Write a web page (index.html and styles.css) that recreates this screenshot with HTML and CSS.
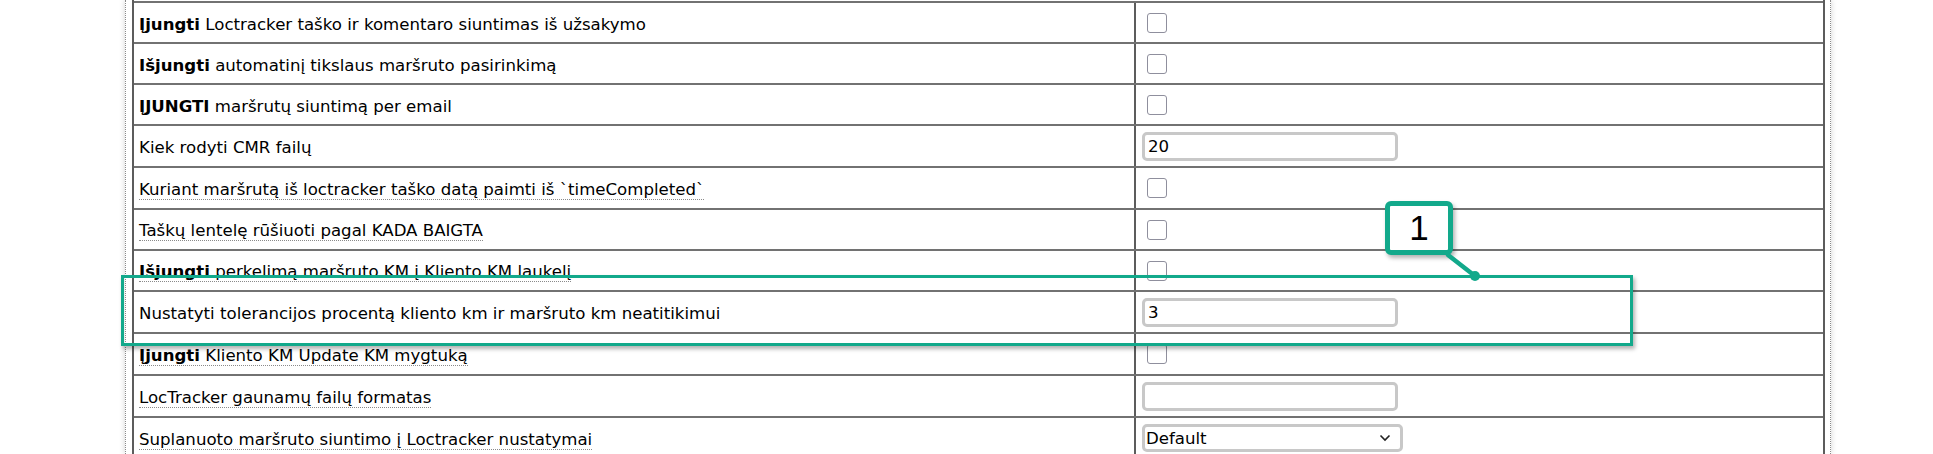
FILE: index.html
```html
<!DOCTYPE html>
<html lang="lt">
<head>
<meta charset="utf-8">
<title>Nustatymai</title>
<link rel="stylesheet" href="styles.css">
</head>
<body>
<div class="page">
  <div class="sheet">
    <div class="settings">
      <div class="row h41">
        <div class="label"><span class="txt"><b>Įjungti</b> Loctracker taško ir komentaro siuntimas iš užsakymo</span></div>
        <div class="value"><input type="checkbox" class="check"></div>
      </div>
      <div class="row h41">
        <div class="label"><span class="txt"><b>Išjungti</b> automatinį tikslaus maršruto pasirinkimą</span></div>
        <div class="value"><input type="checkbox" class="check"></div>
      </div>
      <div class="row h41">
        <div class="label"><span class="txt"><b>ĮJUNGTI</b> maršrutų siuntimą per email</span></div>
        <div class="value"><input type="checkbox" class="check"></div>
      </div>
      <div class="row h42">
        <div class="label"><span class="txt">Kiek rodyti CMR failų</span></div>
        <div class="value"><input type="text" class="field" value="20"></div>
      </div>
      <div class="row h42">
        <div class="label"><span class="txt hint">Kuriant maršrutą iš loctracker taško datą paimti iš `timeCompleted`</span></div>
        <div class="value"><input type="checkbox" class="check"></div>
      </div>
      <div class="row h41">
        <div class="label"><span class="txt hint">Taškų lentelę rūšiuoti pagal KADA BAIGTA</span></div>
        <div class="value"><input type="checkbox" class="check"></div>
      </div>
      <div class="row h41">
        <div class="label"><span class="txt hint"><b>Išjungti</b> perkelimą maršruto KM į Kliento KM laukelį</span></div>
        <div class="value"><input type="checkbox" class="check"></div>
      </div>
      <div class="row h42">
        <div class="label"><span class="txt">Nustatyti tolerancijos procentą kliento km ir maršruto km neatitikimui</span></div>
        <div class="value"><input type="text" class="field" value="3"></div>
      </div>
      <div class="row h42">
        <div class="label"><span class="txt hint"><b>Įjungti</b> Kliento KM Update KM mygtuką</span></div>
        <div class="value"><input type="checkbox" class="check"></div>
      </div>
      <div class="row h42">
        <div class="label"><span class="txt hint">LocTracker gaunamų failų formatas</span></div>
        <div class="value"><input type="text" class="field" value=""></div>
      </div>
      <div class="row h42">
        <div class="label"><span class="txt hint">Suplanuoto maršruto siuntimo į Loctracker nustatymai</span></div>
        <div class="value">
          <div class="select"><span>Default</span>
            <svg class="chev" width="12" height="8" viewBox="0 0 12 8"><path d="M1.5 1.5 L6 6 L10.5 1.5" fill="none" stroke="#222" stroke-width="1.6"/></svg>
          </div>
        </div>
      </div>
    </div>
  </div>

  <div class="highlight"></div>
  <div class="callout">1</div>
  <svg class="leader" width="60" height="50" viewBox="0 0 60 50">
    <line x1="6" y1="6" x2="33" y2="27" stroke="#12a98b" stroke-width="4.5" stroke-linecap="round"/>
    <circle cx="33" cy="27" r="5" fill="#12a98b"/>
  </svg>
</div>
</body>
</html>
```

FILE: styles.css
```css
html, body {
  margin: 0;
  padding: 0;
  background: #ffffff;
}

body {
  font-family: "DejaVu Sans", sans-serif;
  font-size: 16.6px;
  color: #000;
  overflow: hidden;
}

.page {
  position: relative;
  padding-left: 125px;
  height: 454px;
}

.sheet {
  width: 1693px;
  padding: 0 5px 0 6px;
  border-left: 1px dotted #8a8a8a;
  border-right: 1px dotted #8a8a8a;
  box-shadow: 0 0 6px rgba(0, 0, 0, 0.18);
  background: #fff;
  height: 454px;
  box-sizing: content-box;
}

.settings {
  display: flex;
  flex-direction: column;
  padding-top: 1px;
  border-left: 2px solid #5c5c5c;
  border-right: 2px solid #5c5c5c;
}

.row {
  display: grid;
  grid-template-columns: 1000px 1fr;
  border-top: 2px solid #727272;
  box-sizing: border-box;
}

.h41 { height: 41px; }
.h42 { height: 42px; }

.label {
  display: flex;
  align-items: center;
  padding: 3px 0 0 5px;
  white-space: nowrap;
}

.txt {
  line-height: 19px;
}

.label b {
  font-weight: bold;
}

.hint {
  border-bottom: 1px dotted #8a8a8a;
}

.value {
  display: flex;
  align-items: center;
  border-left: 2px solid #5c5c5c;
  padding-left: 6px;
}

.check {
  appearance: none;
  -webkit-appearance: none;
  width: 20px;
  height: 20px;
  margin: 0 0 0 5px;
  border: 1.5px solid #8f8f9d;
  border-radius: 3px;
  background: #fff;
  box-sizing: border-box;
}

.field {
  width: 256px;
  height: 29px;
  margin: 0;
  box-sizing: border-box;
  border: 3px solid #c8c8c8;
  border-radius: 5px;
  padding: 0 0 0 3px;
  font-family: "DejaVu Sans", sans-serif;
  font-size: 16.6px;
  color: #000;
  background: #fff;
  outline: none;
}

.select {
  width: 261px;
  height: 28px;
  box-sizing: border-box;
  border: 3px solid #c8c8c8;
  border-radius: 5px;
  display: flex;
  align-items: center;
  justify-content: space-between;
  padding: 0 9px 0 1px;
  background: #fff;
}

.highlight {
  position: absolute;
  left: 121px;
  top: 275px;
  width: 1512px;
  height: 71px;
  box-sizing: border-box;
  border: 3px solid #12a98b;
  box-shadow: 2px 3px 4px rgba(0, 0, 0, 0.3);
}

.callout {
  position: absolute;
  left: 1385px;
  top: 201px;
  width: 68px;
  height: 54px;
  box-sizing: border-box;
  border: 5px solid #12a98b;
  border-radius: 6px;
  background: #fff;
  box-shadow: 2px 3px 4px rgba(0, 0, 0, 0.3);
  font-family: "Liberation Sans", Arial, sans-serif;
  font-size: 35px;
  line-height: 44px;
  text-align: center;
  color: #000;
}

.leader {
  position: absolute;
  left: 1442px;
  top: 249px;
}
```
